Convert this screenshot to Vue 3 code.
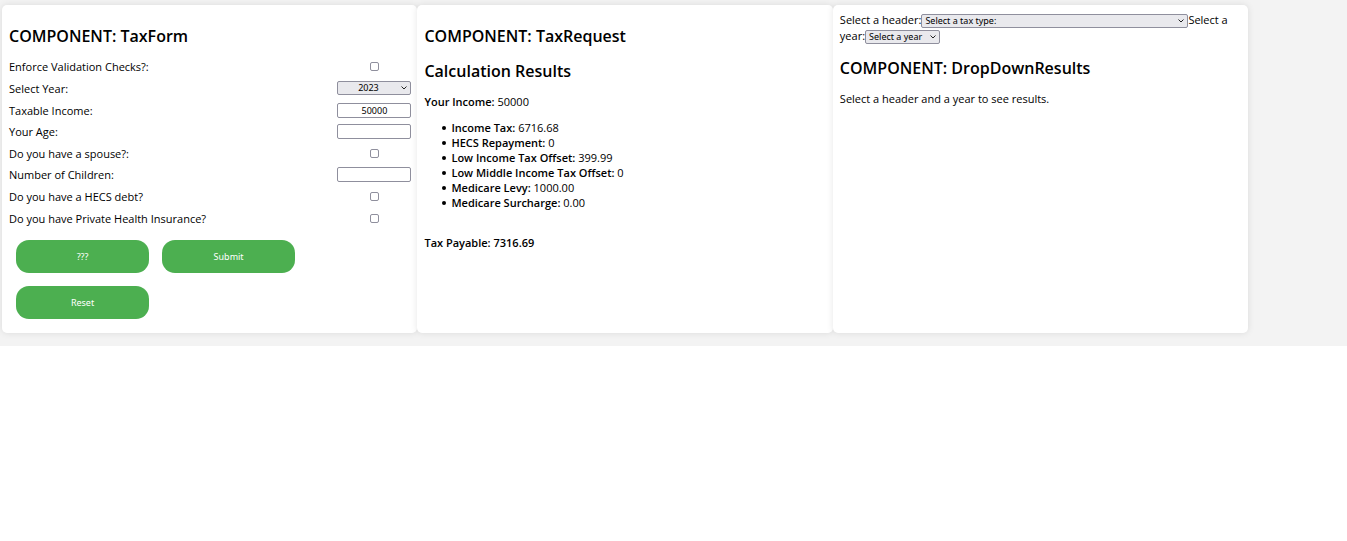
<script setup>
import { reactive, ref } from 'vue'

const blank = () => ({
  validate: false,
  year: '2023',
  income: '50000',
  age: '',
  spouse: false,
  children: '',
  hecs: false,
  insurance: false,
})
const form = reactive(blank())
const header = ref('')
const year = ref('')

const fields = [
  { key: 'validate', label: 'Enforce Validation Checks?:', type: 'checkbox' },
  { key: 'year', label: 'Select Year:', type: 'select' },
  { key: 'income', label: 'Taxable Income:', type: 'text' },
  { key: 'age', label: 'Your Age:', type: 'text' },
  { key: 'spouse', label: 'Do you have a spouse?:', type: 'checkbox' },
  { key: 'children', label: 'Number of Children:', type: 'text' },
  { key: 'hecs', label: 'Do you have a HECS debt?', type: 'checkbox' },
  { key: 'insurance', label: 'Do you have Private Health Insurance?', type: 'checkbox' },
]

const results = [
  ['Income Tax:', '6716.68'],
  ['HECS Repayment:', '0'],
  ['Low Income Tax Offset:', '399.99'],
  ['Low Middle Income Tax Offset:', '0'],
  ['Medicare Levy:', '1000.00'],
  ['Medicare Surcharge:', '0.00'],
]
const years = ['2023', '2022', '2021']
</script>

<template>
  <main class="page">
    <div class="cards">
      <section class="card">
        <h2>COMPONENT: TaxForm</h2>
        <form @submit.prevent @reset.prevent="Object.assign(form, blank())">
          <div class="rows">
            <div v-for="f in fields" :key="f.key" class="row">
              <label :for="f.key">{{ f.label }}</label>
              <div class="control">
                <input v-if="f.type === 'checkbox'" :id="f.key" v-model="form[f.key]" type="checkbox" />
                <span v-else-if="f.type === 'select'" class="picker">
                  <select :id="f.key" v-model="form[f.key]" class="centered">
                    <option v-for="y in years" :key="y">{{ y }}</option>
                  </select>
                  <svg viewBox="0 0 6 4" aria-hidden="true"><path d="M0.5 0.5 L3 3 L5.5 0.5" /></svg>
                </span>
                <input v-else :id="f.key" v-model="form[f.key]" type="text" />
              </div>
            </div>
          </div>
          <div class="actions">
            <button type="button">???</button>
            <button type="submit">Submit</button>
            <button type="reset">Reset</button>
          </div>
        </form>
      </section>

      <section class="card">
        <h2>COMPONENT: TaxRequest</h2>
        <h2>Calculation Results</h2>
        <p><strong>Your Income:</strong> 50000</p>
        <ul>
          <li v-for="[name, value] in results" :key="name"><strong>{{ name }}</strong> {{ value }}</li>
        </ul>
        <p><strong>Tax Payable: 7316.69</strong></p>
      </section>

      <section class="card">
        <div class="filters">
          <label for="tax-header">Select a header:</label><span class="picker wide"><select id="tax-header" v-model="header">
            <option value="">Select a tax type:</option>
            <option>Income Tax</option>
          </select><svg viewBox="0 0 6 4" aria-hidden="true"><path d="M0.5 0.5 L3 3 L5.5 0.5" /></svg></span><label for="tax-year"><span>Select a</span> <span>year:</span></label><span class="picker short"><select id="tax-year" v-model="year">
            <option value="">Select a year</option>
            <option v-for="y in years" :key="y">{{ y }}</option>
          </select><svg viewBox="0 0 6 4" aria-hidden="true"><path d="M0.5 0.5 L3 3 L5.5 0.5" /></svg></span>
        </div>
        <h2>COMPONENT: DropDownResults</h2>
        <p>Select a header and a year to see results.</p>
      </section>
    </div>
  </main>
</template>

<style>
body {
  margin: 0;
  background: #fff;
}
</style>

<style scoped>
.page {
  padding: 5px 2px 13px;
  background: #f3f3f3;
  color: #000;
  font: 11px/15px "Open Sans", "Noto Sans", sans-serif;
}
.cards {
  display: grid;
  grid-template-columns: repeat(3, 1fr);
  width: 92.8%;
}
.card {
  box-sizing: border-box;
  min-width: 0;
  padding: 7px 6px 14px 7px;
  background: #fff;
  border-radius: 5px;
  box-shadow: 0 0 7px rgba(0, 0, 0, 0.1);
}
h2 {
  margin: 13px 0;
  font-size: 16px;
  line-height: 22px;
  font-weight: 600;
}
h2:last-of-type {
  margin-bottom: 12px;
}
strong {
  font-weight: 600;
}
p {
  margin: 0;
}
.rows {
  display: grid;
  grid-auto-rows: 1fr;
  min-height: 173px;
  margin-top: -3px;
}
.row {
  display: flex;
  align-items: center;
  justify-content: space-between;
}
.control {
  display: flex;
  justify-content: center;
  width: 74px;
}
input,
select {
  appearance: none;
  box-sizing: border-box;
  margin: 0;
  border: 1px solid #8f8f9d;
  border-radius: 2px;
  background: #fff;
  color: #000;
  font: 9px/12px "Noto Sans", "Open Sans", sans-serif;
}
input[type="text"] {
  width: 100%;
  height: 15px;
  padding: 0;
  text-align: center;
}
input[type="checkbox"] {
  width: 9px;
  height: 9px;
}
input[type="checkbox"]:checked {
  background: #0060df;
}
.picker {
  position: relative;
  display: inline-block;
  width: 100%;
}
.picker select {
  display: block;
  width: 100%;
  height: 14px;
  padding: 0 12px 0 3px;
  background: #e9e9ed;
}
.picker .centered {
  padding-right: 15px;
  text-align: center;
  text-align-last: center;
}
.picker svg {
  position: absolute;
  right: 4px;
  top: 50%;
  width: 6px;
  height: 4px;
  margin-top: -2px;
  fill: none;
  stroke: #222;
  pointer-events: none;
}
.picker.wide {
  width: 267px;
  vertical-align: middle;
}
.picker.short {
  width: 75px;
  vertical-align: middle;
}
.filters {
  line-height: 16px;
}
.actions {
  display: flex;
  flex-wrap: wrap;
  gap: 13px;
  padding: 11px 4px 0 7px;
}
button {
  width: 34%;
  height: 33px;
  padding: 0;
  border: 0;
  border-radius: 13px;
  background: #4caf50;
  color: #fff;
  font: 9px/14px "Noto Sans", "Open Sans", sans-serif;
}
ul {
  margin: 11px 0 25px;
  padding-left: 27px;
  list-style: none;
}
li::before {
  content: "";
  display: inline-block;
  width: 4px;
  height: 4px;
  margin: 0 5px 2px -9px;
  border-radius: 50%;
  background: #000;
}
</style>
